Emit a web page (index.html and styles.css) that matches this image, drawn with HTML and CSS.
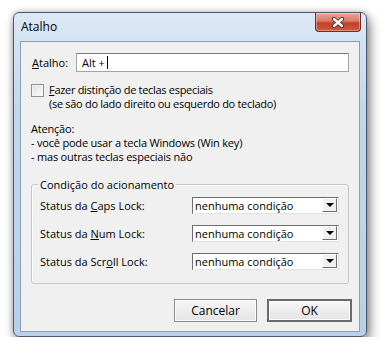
FILE: index.html
```html
<!DOCTYPE html>
<html lang="pt">
<head>
  <meta charset="UTF-8">
  <title>Atalho</title>
  <link rel="stylesheet" href="styles.css">
</head>
<body>
  <div class="window">
    <div class="titlebar">
      <span class="title">Atalho</span>
      <div class="close">
        <svg width="14" height="11" viewBox="0 0 14 11">
          <path d="M3 2 L11 9 M11 2 L3 9" stroke="#5a2418" stroke-width="4.2" stroke-linecap="round"/>
          <path d="M3 2 L11 9 M11 2 L3 9" stroke="#fff" stroke-width="2.4" stroke-linecap="round"/>
        </svg>
      </div>
    </div>
    <div class="client">
      <div class="field-row">
        <span class="label"><u>A</u>talho:</span>
        <div class="textbox">Alt +<span class="caret"></span></div>
      </div>

      <div class="check-row">
        <span class="checkbox"></span>
        <div class="check-text">
          <span><u>F</u>azer distinção de teclas especiais</span>
          <span>(se são do lado direito ou esquerdo do teclado)</span>
        </div>
      </div>

      <div class="note">
        <span>Atenção:</span>
        <span>- você pode usar a tecla Windows (Win key)</span>
        <span>- mas outras teclas especiais não</span>
      </div>

      <div class="group">
        <span class="legend">Condição do acionamento</span>
        <div class="cond-row">
          <span class="label">Status da <u>C</u>aps Lock:</span>
          <div class="combo"><span class="value">nenhuma condição</span><span class="drop"><i></i></span></div>
        </div>
        <div class="cond-row">
          <span class="label">Status da <u>N</u>um Lock:</span>
          <div class="combo"><span class="value">nenhuma condição</span><span class="drop"><i></i></span></div>
        </div>
        <div class="cond-row">
          <span class="label">Status da Scr<u>o</u>ll Lock:</span>
          <div class="combo"><span class="value">nenhuma condição</span><span class="drop"><i></i></span></div>
        </div>
      </div>

      <div class="buttons">
        <div class="btn">Cancelar</div>
        <div class="btn default">OK</div>
      </div>
    </div>
  </div>
</body>
</html>
```

FILE: styles.css
```css
*{
  margin: 0;
  padding: 0;
  box-sizing: border-box;
}
body {
  background: #fff;
  font-family: "Open Sans", "Noto Sans", sans-serif;
  font-size: 11px;
  color: #000;
  padding: 12px 0 0 13px;
}
u {
  text-decoration: underline;
  text-underline-offset: 1px;
}
.window {
  width: 354px;
  height: 325px;
  border: 1px solid #4a5a6c;
  border-radius: 6px;
  background: linear-gradient(180deg, #dbe8f5 0%, #c3d7ec 30%, #b9d0e8 100%);
  box-shadow: 3px 6px 12px rgba(0,0,0,0.45), 0 0 6px rgba(0,0,0,0.25);
  padding: 0 6px 4px 6px;
  display: flex;
  flex-direction: column;
}
.titlebar {
  height: 28px;
  display: flex;
  align-items: flex-start;
  justify-content: space-between;
}
.title {
  font-size: 12px;
  margin: 5px 0 0 1px;
}
.close {
  width: 46px;
  height: 19px;
  margin-right: -1px;
  border: 1px solid #6b2f24;
  border-top: none;
  border-radius: 0 0 4px 4px;
  background: linear-gradient(180deg, #e9a99a 0%, #d87a66 45%, #c2412a 55%, #cd5a3e 100%);
  box-shadow: inset 0 0 0 1px rgba(255,255,255,0.35);
  display: flex;
  align-items: center;
  justify-content: center;
}
.client {
  flex: 1;
  background: #f0f0f0;
  border: 1px solid #8a9fb6;
  padding: 11px 7px 0 10px;
}
.field-row {
  display: flex;
  align-items: center;
  height: 19px;
  margin-right: 3px;
}
.field-row .label {
  width: 44px;
  margin-left: 1px;
}
.textbox {
  flex: 1;
  height: 19px;
  background: #fff;
  border: 1px solid #a3a3a3;
  border-top-color: #7a7a7a;
  padding-left: 5px;
  display: flex;
  align-items: center;
}
.caret {
  width: 1px;
  height: 13px;
  background: #000;
  margin-left: 2px;
}
.check-row {
  display: flex;
  margin-top: 11px;
}
.checkbox {
  width: 13px;
  height: 13px;
  margin-top: 1px;
  background: linear-gradient(135deg, #dcdcdc, #fff);
  border: 1px solid #8f8f8f;
  box-shadow: inset 0 0 0 1px #f4f4f4;
}
.check-text {
  display: flex;
  flex-direction: column;
  margin-left: 5px;
  line-height: 14px;
  letter-spacing: -0.3px;
}
.note {
  display: flex;
  flex-direction: column;
  line-height: 14px;
  margin-top: 11px;
  letter-spacing: -0.2px;
}
.group {
  position: relative;
  margin: 20px 3px 0 0;
  height: 100px;
  border: 1px solid #c6c6c6;
  border-radius: 3px;
  box-shadow: inset 1px 1px 0 #fff;
  padding: 12px 9px 0 8px;
  display: flex;
  flex-direction: column;
  gap: 11px;
}
.legend {
  position: absolute;
  left: 6px;
  top: -8px;
  background: #f0f0f0;
  padding: 0 2px;
  line-height: 15px;
}
.cond-row {
  display: flex;
  align-items: center;
  justify-content: space-between;
  height: 17px;
}
.combo {
  width: 147px;
  height: 17px;
  background: #fff;
  border: 1px solid;
  border-color: #6d6d6d #e3e3e3 #e3e3e3 #6d6d6d;
  display: flex;
  align-items: stretch;
}
.combo .value {
  flex: 1;
  padding-left: 2px;
  line-height: 15px;
}
.drop {
  width: 15px;
  margin: 0 1px 1px 0;
  background: #f0f0f0;
  border: 1px solid;
  border-color: #fff #6d6d6d #6d6d6d #fff;
  display: flex;
  align-items: center;
  justify-content: center;
}
.drop i {
  width: 0;
  height: 0;
  border-left: 4px solid transparent;
  border-right: 4px solid transparent;
  border-top: 4px solid #000;
}
.buttons {
  display: flex;
  justify-content: flex-end;
  gap: 10px;
  margin-top: 15px;
}
.btn {
  width: 83px;
  height: 23px;
  border: 1px solid #8a8a8a;
  background: linear-gradient(180deg, #f6f6f6 0%, #e4e4e4 100%);
  box-shadow: inset 0 0 0 1px #fcfcfc;
  display: flex;
  align-items: center;
  justify-content: center;
  font-size: 12px;
}
.btn.default {
  width: 85px;
  border: 2px solid #6a6a6a;
}
```
